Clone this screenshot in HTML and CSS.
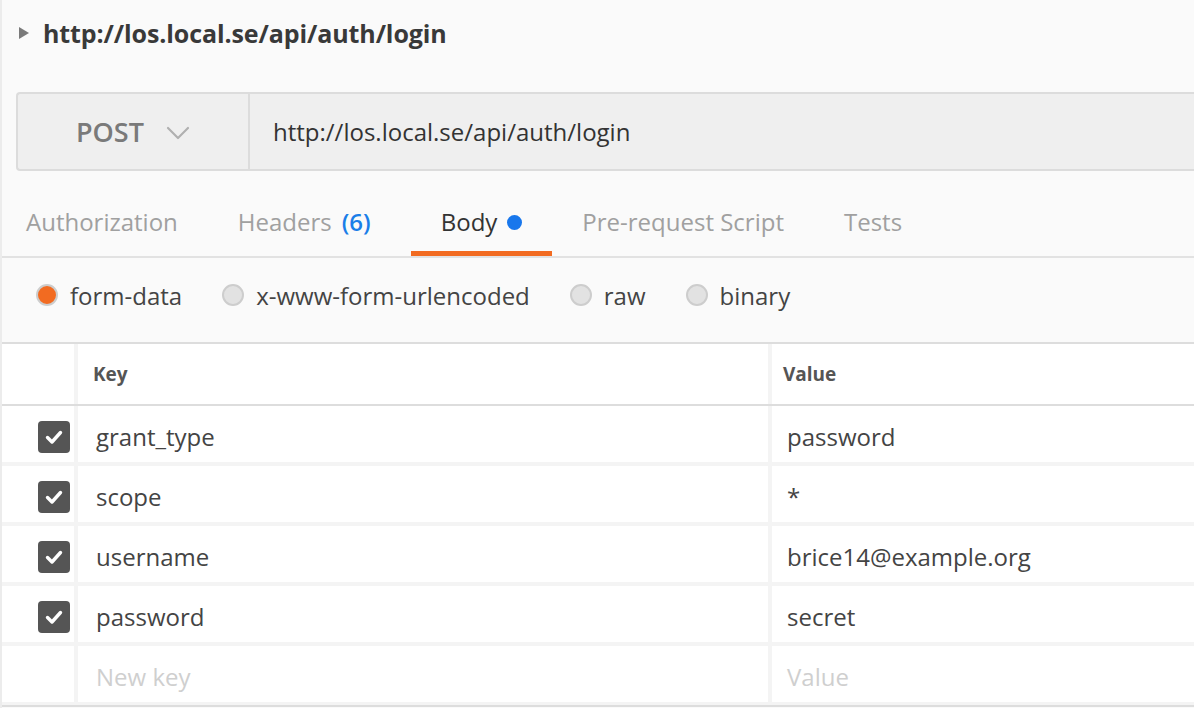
FILE: index.html
```html
<!DOCTYPE html>
<html>
<head>
<meta charset="utf-8">
<link rel="stylesheet" href="styles.css">
</head>
<body>
<div class="page">
  <div class="title">
    <span class="caret"></span>
    <span class="title-text">http://los.local.se/api/auth/login</span>
  </div>

  <div class="urlbar">
    <div class="method">
      <span>POST</span>
      <svg class="chev" width="24" height="14" viewBox="0 0 24 14"><polyline points="2,2 12,12 22,2" fill="none" stroke="#b0b0b0" stroke-width="2.2" stroke-linecap="round" stroke-linejoin="round"/></svg>
    </div>
    <div class="url">http://los.local.se/api/auth/login</div>
  </div>

  <div class="tabs">
    <div class="tab">Authorization</div>
    <div class="tab tab-headers">Headers <span class="count">(6)</span></div>
    <div class="tab active">Body <span class="dot"></span></div>
    <div class="tab">Pre-request Script</div>
    <div class="tab">Tests</div>
  </div>

  <div class="types">
    <label class="type"><span class="radio on"></span>form-data</label>
    <label class="type"><span class="radio"></span>x-www-form-urlencoded</label>
    <label class="type"><span class="radio"></span>raw</label>
    <label class="type"><span class="radio"></span>binary</label>
  </div>

  <div class="kv">
    <div class="kv-head">
      <div class="cell"></div>
      <div class="cell head">Key</div>
      <div class="cell head val">Value</div>
    </div>
    <div class="kv-body">
      <div class="cell check"><span class="box"><svg width="32" height="32" viewBox="0 0 32 32"><polyline points="9.5,16.5 14,21 22.5,11.5" fill="none" stroke="#fff" stroke-width="3.4" stroke-linecap="round" stroke-linejoin="round"/></svg></span></div>
      <div class="cell key">grant_type</div>
      <div class="cell value">password</div>

      <div class="cell check"><span class="box"><svg width="32" height="32" viewBox="0 0 32 32"><polyline points="9.5,16.5 14,21 22.5,11.5" fill="none" stroke="#fff" stroke-width="3.4" stroke-linecap="round" stroke-linejoin="round"/></svg></span></div>
      <div class="cell key">scope</div>
      <div class="cell value">*</div>

      <div class="cell check"><span class="box"><svg width="32" height="32" viewBox="0 0 32 32"><polyline points="9.5,16.5 14,21 22.5,11.5" fill="none" stroke="#fff" stroke-width="3.4" stroke-linecap="round" stroke-linejoin="round"/></svg></span></div>
      <div class="cell key">username</div>
      <div class="cell value">brice14@example.org</div>

      <div class="cell check"><span class="box"><svg width="32" height="32" viewBox="0 0 32 32"><polyline points="9.5,16.5 14,21 22.5,11.5" fill="none" stroke="#fff" stroke-width="3.4" stroke-linecap="round" stroke-linejoin="round"/></svg></span></div>
      <div class="cell key">password</div>
      <div class="cell value">secret</div>

      <div class="cell check"></div>
      <div class="cell key placeholder">New key</div>
      <div class="cell value placeholder">Value</div>
    </div>
  </div>
</div>
</body>
</html>
```

FILE: styles.css
```css
html, body {
  margin: 0;
  padding: 0;
  background: #fafafa;
}

body {
  font-family: "Open Sans", "Liberation Sans", sans-serif;
  color: #333;
  overflow: hidden;
}

.page {
  width: 1194px;
  height: 708px;
  border-left: 2px solid #ececec;
  box-sizing: border-box;
  overflow: hidden;
}

.title {
  height: 66px;
  display: flex;
  align-items: center;
  padding-left: 17px;
  gap: 14px;
}

.caret {
  width: 0;
  height: 0;
  border-left: 10px solid #7a7a7a;
  border-top: 6px solid transparent;
  border-bottom: 6px solid transparent;
}

.title-text {
  font-size: 25px;
  font-weight: 700;
  color: #393939;
  line-height: 30px;
  letter-spacing: -0.1px;
}

.urlbar {
  margin: 26px 0 0 14px;
  height: 75px;
  border: 2px solid #dcdcdc;
  border-right: none;
  border-radius: 4px 0 0 4px;
  background: #efefef;
  display: flex;
}

.method {
  width: 230px;
  flex: none;
  border-right: 2px solid #dcdcdc;
  display: flex;
  align-items: center;
  justify-content: center;
  gap: 22px;
  font-size: 27px;
  font-weight: 600;
  color: #7a7a7a;
}

.chev {
  margin-top: 2px;
}

.url {
  display: flex;
  align-items: center;
  padding-left: 23px;
  font-size: 24px;
  color: #333;
}

.tabs {
  display: flex;
  border-bottom: 2px solid #e2e2e2;
}

.tab {
  padding: 36px 30px 14px;
  line-height: 30px;
  font-size: 24px;
  color: #a0a0a0;
  border-bottom: 5px solid transparent;
  display: flex;
  align-items: center;
  gap: 10px;
  white-space: nowrap;
}

.tab:first-child {
  padding-left: 24px;
}

.tab-headers {
  margin-right: 10px;
}

.tab.active {
  color: #333;
  border-bottom-color: #f26b21;
}

.count {
  color: #1a7ee8;
  font-weight: 600;
}

.dot {
  width: 15px;
  height: 15px;
  border-radius: 50%;
  background: #1877ec;
}

.types {
  height: 74px;
  padding-bottom: 10px;
  padding-left: 34px;
  display: flex;
  align-items: center;
  gap: 40px;
}

.type {
  display: flex;
  align-items: center;
  gap: 12px;
  font-size: 24px;
  color: #444;
}

.radio {
  width: 18px;
  height: 18px;
  border-radius: 50%;
  border: 2px solid #cdcdcd;
  background: #e2e2e2;
}

.radio.on {
  background: #f26b21;
}

.kv {
  border-top: 2px solid #dddddd;
  border-bottom: 2px solid #dddddd;
  background: #fff;
}

.kv-head,
.kv-body {
  display: grid;
  grid-template-columns: 72px 690px 1fr;
  column-gap: 4px;
  background: #f4f4f4;
}

.kv-head {
  height: 60px;
  border-bottom: 2px solid #dddddd;
}

.kv-body {
  row-gap: 4px;
  grid-auto-rows: 56px;
  padding-bottom: 3px;
}

.cell {
  background: #fff;
  display: flex;
  align-items: center;
  box-sizing: border-box;
}

.head {
  font-size: 19px;
  font-weight: 700;
  color: #555;
  padding-left: 15px;
}

.head.val {
  padding-left: 11px;
}

.check {
  justify-content: flex-end;
  padding-right: 4px;
  padding-top: 6px;
}

.box {
  width: 32px;
  height: 32px;
  border-radius: 4px;
  background: #555;
  display: block;
}

.box svg {
  display: block;
}

.key {
  padding-left: 18px;
  padding-top: 5px;
  font-size: 24px;
  color: #444;
}

.value {
  padding-left: 15px;
  padding-top: 5px;
  font-size: 24px;
  color: #444;
}

.placeholder {
  color: #cfcfcf;
}
```
